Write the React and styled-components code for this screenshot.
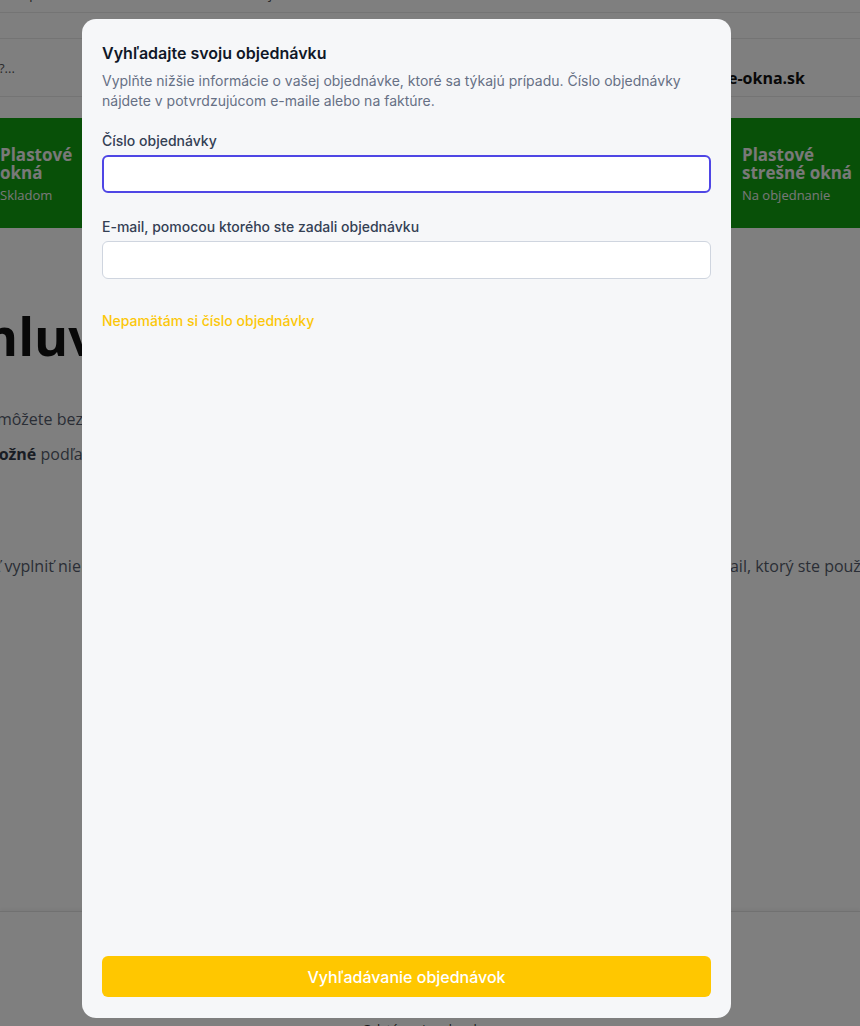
import React from "react";
import styled, { createGlobalStyle } from "styled-components";

const GlobalStyle = createGlobalStyle`
  * { box-sizing: border-box; }
  html, body { margin: 0; padding: 0; }
  body {
    background: #ffffff;
    font-family: "Open Sans", "Liberation Sans", sans-serif;
    overflow: hidden;
  }
`;

const Page = styled.div`
  width: 860px;
  height: 1026px;
  overflow: hidden;
  display: flex;
  flex-direction: column;
`;

const TopBar = styled.div`
  height: 13px;
  border-bottom: 1px solid #e8e8e8;
  font-size: 13px;
  color: #444;
  line-height: 13px;
  padding-left: 12px;
  overflow: hidden;
  span {
    display: block;
    margin-top: -12px;
  }
`;

const SubBar = styled.div`
  height: 26px;
  border-bottom: 1px solid #e8e8e8;
`;

const Header = styled.div`
  height: 58px;
  border-bottom: 1px solid #e8e8e8;
  display: flex;
  justify-content: space-between;
  padding-right: 55px;
`;

const SearchHint = styled.div`
  font-size: 13px;
  color: #555;
  padding-top: 20px;
  margin-left: -66px;
`;

const Contact = styled.div`
  font-size: 16px;
  font-weight: 700;
  color: #111;
  padding-top: 28px;
`;

const Band = styled.div`
  margin-top: 21px;
  height: 110px;
  background: #10a010;
  display: grid;
  grid-template-columns: repeat(6, 148.4px);
  margin-left: -10px;
`;

const Tile = styled.div`
  padding: 28px 26px 0 10px;
`;

const TileTitle = styled.div`
  font-size: 17px;
  font-weight: 700;
  line-height: 18px;
  color: #f2f2f2;
`;

const TileSub = styled.div`
  margin-top: 4px;
  font-size: 13px;
  color: #f0f0f0;
`;

const Content = styled.div`
  margin-left: -48px;
  white-space: nowrap;
`;

const Heading = styled.h1`
  margin: 77px 0 35px -15px;
  font-size: 52px;
  line-height: 62px;
  font-weight: 700;
  color: #111;
`;

const Line = styled.p`
  margin: ${(p) => p.$gap || 0}px 0 0 ${(p) => p.$shift || 0}px;
  font-size: 16px;
  line-height: 35px;
  color: #555c6c;
  b { font-weight: 700; color: #333a48; }
`;

const Footer = styled.div`
  margin-top: auto;
  height: 115px;
  border-top: 1px solid #e2e2e2;
  box-shadow: 0 -2px 4px rgba(0, 0, 0, 0.05);
  display: flex;
  justify-content: center;
  align-items: flex-end;
  font-size: 13px;
  color: #333;
  span {
    margin-bottom: -12px;
  }
`;

const Overlay = styled.div`
  position: fixed;
  inset: 0;
  background: rgba(0, 0, 0, 0.5);
  display: flex;
  align-items: flex-start;
  padding: 19px 0 0 82px;
`;

const Modal = styled.div`
  width: 649px;
  height: 999px;
  background: #f6f7f9;
  border-radius: 14px;
  padding: 22px 20px 21px;
  display: flex;
  flex-direction: column;
  font-family: Inter, "Liberation Sans", sans-serif;
`;

const Title = styled.h2`
  margin: 0;
  font-size: 16px;
  line-height: 24px;
  font-weight: 600;
  color: #101828;
`;

const Description = styled.p`
  margin: 6px 0 0;
  font-size: 14px;
  line-height: 20px;
  color: #667085;
`;

const Label = styled.label`
  display: block;
  margin-top: ${(p) => p.$gap}px;
  font-size: 14px;
  line-height: 20px;
  font-weight: 500;
  color: #344054;
`;

const Input = styled.input`
  display: block;
  width: 100%;
  height: 38px;
  margin-top: 4px;
  background: #ffffff;
  border: ${(p) => (p.$focused ? "2px solid #4f46e5" : "1px solid #cfd5df")};
  border-radius: 6px;
  outline: none;
  font: inherit;
  padding: 0 10px;
`;

const ForgotLink = styled.a`
  display: block;
  margin-top: 32px;
  font-size: 14px;
  line-height: 20px;
  font-weight: 500;
  color: #fcc70a;
  text-decoration: none;
`;

const SubmitButton = styled.button`
  margin-top: auto;
  height: 41px;
  width: 100%;
  border: none;
  border-radius: 6px;
  background: #ffc700;
  color: #ffffff;
  font-family: inherit;
  font-size: 16px;
  font-weight: 500;
`;

const tiles = [
  ["Plastové okná", "Skladom"],
  ["Hliníkové okná", "Na objednanie"],
  ["Plastové dvere", "Skladom"],
  ["Vchodové dvere", "Na objednanie"],
  ["Balkónové dvere", "Skladom"],
  ["Plastové strešné okná", "Na objednanie"],
];

export default function App() {
  return (
    <>
      <GlobalStyle />
      <Page>
        <TopBar>
          <span>Doprava zdarma nad 500 € · Montáž v celej SR · Poradíme vám</span>
        </TopBar>
        <SubBar />
        <Header>
          <SearchHint>Čo hľadáte?...</SearchHint>
          <Contact>info@plastove-okna.sk</Contact>
        </Header>
        <Band>
          {tiles.map(([title, sub]) => (
            <Tile key={title}>
              <TileTitle>{title}</TileTitle>
              <TileSub>{sub}</TileSub>
            </Tile>
          ))}
        </Band>
        <Content>
          <Heading>Zmluvy a objednávky</Heading>
          <Line>Teraz môžete bezplatne odstúpiť od zmluvy do 14 dní od prevzatia tovaru.</Line>
          <Line $shift={-6}>
            Je to <b>možné</b> podľa zákona o ochrane spotrebiteľa pri predaji na diaľku.
          </Line>
          <Line $gap={77} $shift={-62}>
            Stačí zabudnúť vyplniť niektoré povinné údaje o objednávke, ako je číslo objednávky a tiež si aj váš kontaktný e-mail, ktorý ste použili pri nákupe.
          </Line>
        </Content>
        <Footer>
          <span>Odstúpenie od zmluvy</span>
        </Footer>
      </Page>
      <Overlay>
        <Modal>
          <Title>Vyhľadajte svoju objednávku</Title>
          <Description>
            Vyplňte nižšie informácie o vašej objednávke, ktoré sa týkajú prípadu. Číslo objednávky
            nájdete v potvrdzujúcom e-maile alebo na faktúre.
          </Description>
          <Label $gap={20}>Číslo objednávky</Label>
          <Input $focused />
          <Label $gap={24}>E-mail, pomocou ktorého ste zadali objednávku</Label>
          <Input />
          <ForgotLink href="#">Nepamätám si číslo objednávky</ForgotLink>
          <SubmitButton>Vyhľadávanie objednávok</SubmitButton>
        </Modal>
      </Overlay>
    </>
  );
}
